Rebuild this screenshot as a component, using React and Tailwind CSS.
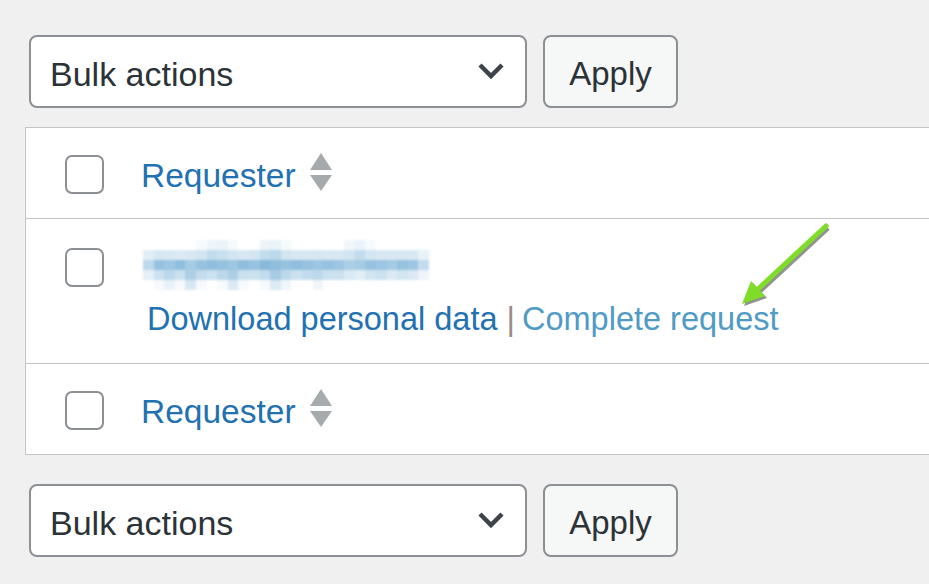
import React from "react";

const FONT = "font-['Liberation_Sans','Arial',sans-serif]";

const blurRows = [
  [0, 0, 0, 0, 0, 0.06, 0.12, 0.14, 0.06, 0, 0, 0.12, 0.14, 0.06, 0, 0, 0, 0, 0, 0.1, 0.14, 0.06, 0, 0, 0, 0, 0],
  [0.2, 0.28, 0.26, 0.24, 0.26, 0.3, 0.4, 0.36, 0.3, 0.26, 0.3, 0.4, 0.45, 0.3, 0.26, 0.26, 0.28, 0.26, 0.26, 0.3, 0.4, 0.3, 0.26, 0.26, 0.26, 0.26, 0.16],
  [0.45, 0.7, 0.65, 0.75, 0.6, 0.7, 0.75, 0.7, 0.65, 0.75, 0.7, 0.8, 0.75, 0.7, 0.75, 0.7, 0.65, 0.7, 0.65, 0.55, 0.6, 0.7, 0.65, 0.6, 0.7, 0.65, 0.4],
  [0.18, 0.35, 0.45, 0.35, 0.55, 0.4, 0.35, 0.45, 0.55, 0.35, 0.35, 0.4, 0.6, 0.45, 0.35, 0.4, 0.45, 0.35, 0.35, 0.25, 0.2, 0.3, 0.35, 0.25, 0.3, 0.25, 0.12],
  [0, 0.06, 0.15, 0.06, 0.26, 0.06, 0, 0.06, 0.24, 0.06, 0, 0.06, 0.24, 0.1, 0, 0, 0.1, 0, 0, 0, 0, 0, 0, 0, 0, 0, 0],
];
const rowHeights = [10, 10, 10, 10, 10];

function Blurred() {
  return (
    <div className="flex flex-col blur-[0.8px]">
      {blurRows.map((row, r) => (
        <div key={r} className="flex" style={{ height: rowHeights[r] }}>
          {row.map((o, c) => (
            <div
              key={c}
              className="w-[10.6px] h-full bg-[#6aa8d2]"
              style={{ opacity: o }}
            />
          ))}
        </div>
      ))}
    </div>
  );
}

function Checkbox() {
  return (
    <div className="w-[39px] h-[39px] shrink-0 rounded-[7px] border-2 border-[#8c8f94] bg-white" />
  );
}

function SortIcon() {
  return (
    <svg width="22" height="38" viewBox="0 0 22 38" className="ml-[14px] shrink-0">
      <polygon points="11,0 22,17 0,17" fill="#a7aaad" />
      <polygon points="0,22 22,22 11,38" fill="#a7aaad" />
    </svg>
  );
}

function HeaderRow({ border, h }) {
  return (
    <div className={`${h} flex items-start pl-[39px] pt-[27px] ${border}`}>
      <Checkbox />
      <div className="flex items-start ml-[37px] mt-[1px]">
        <span className="text-[33.5px] leading-[40px] text-[#2271b1]">Requester</span>
        <div className="mt-[-3px]">
          <SortIcon />
        </div>
      </div>
    </div>
  );
}

function Toolbar() {
  return (
    <div className="flex gap-[16px] pl-[4px]">
      <div className="w-[498px] h-[73px] rounded-[8px] border-2 border-[#8c8f94] bg-white flex items-center justify-between pl-[19px] pr-[20px] pt-[5px]">
        <span className="text-[34px] leading-[40px] text-[#2c3338]">Bulk actions</span>
        <svg width="28" height="18" viewBox="0 0 28 18" className="mt-[-6px]">
          <path d="M3 3 L14 14 L25 3" fill="none" stroke="#3c434a" strokeWidth="4.5" />
        </svg>
      </div>
      <div className="w-[135px] h-[73px] rounded-[8px] border-2 border-[#8c8f94] bg-[#f6f7f7] flex items-center justify-center pt-[4px]">
        <span className="text-[33px] leading-[40px] text-[#2c3338]">Apply</span>
      </div>
    </div>
  );
}

export default function App() {
  return (
    <div className={`relative w-[929px] h-[584px] overflow-hidden bg-[#f0f0f1] pl-[25px] pt-[35px] ${FONT}`}>
      <Toolbar />
      <div className="mt-[19px] w-[940px] border border-[#c3c4c7] bg-white">
        <HeaderRow border="border-b border-[#c3c4c7]" h="h-[91px]" />
        <div className="h-[145px] flex items-start pl-[39px] pt-[29px] border-b border-[#c3c4c7]">
          <Checkbox />
          <div className="ml-[39px] flex flex-col">
            <div className="mt-[-8px]">
              <Blurred />
            </div>
            <div className="mt-[9px] flex items-center text-[32.5px] leading-[40px] ml-[4px]">
              <span className="text-[#2271b1]">Download personal data</span>
              <span className="text-[#9a8a86] ml-[9px] mr-[7px]">|</span>
              <span className="text-[#4f9bc6]">Complete request</span>
            </div>
          </div>
        </div>
        <HeaderRow border="" h="h-[90px]" />
      </div>
      <div className="mt-[29px]">
        <Toolbar />
      </div>
      <svg
        className="absolute left-0 top-0 pointer-events-none"
        width="929"
        height="584"
        viewBox="0 0 929 584"
      >
        <g transform="translate(2,2)" opacity="0.55">
          <line x1="826" y1="226" x2="758" y2="289" stroke="#3a3a3a" strokeWidth="5" />
          <polygon points="742,304 765,296 751,281" fill="#3a3a3a" />
        </g>
        <line x1="826" y1="226" x2="758" y2="289" stroke="#7fdc28" strokeWidth="5" strokeLinecap="round" />
        <polygon points="742,304 765,296 751,281" fill="#7fdc28" />
      </svg>
    </div>
  );
}
